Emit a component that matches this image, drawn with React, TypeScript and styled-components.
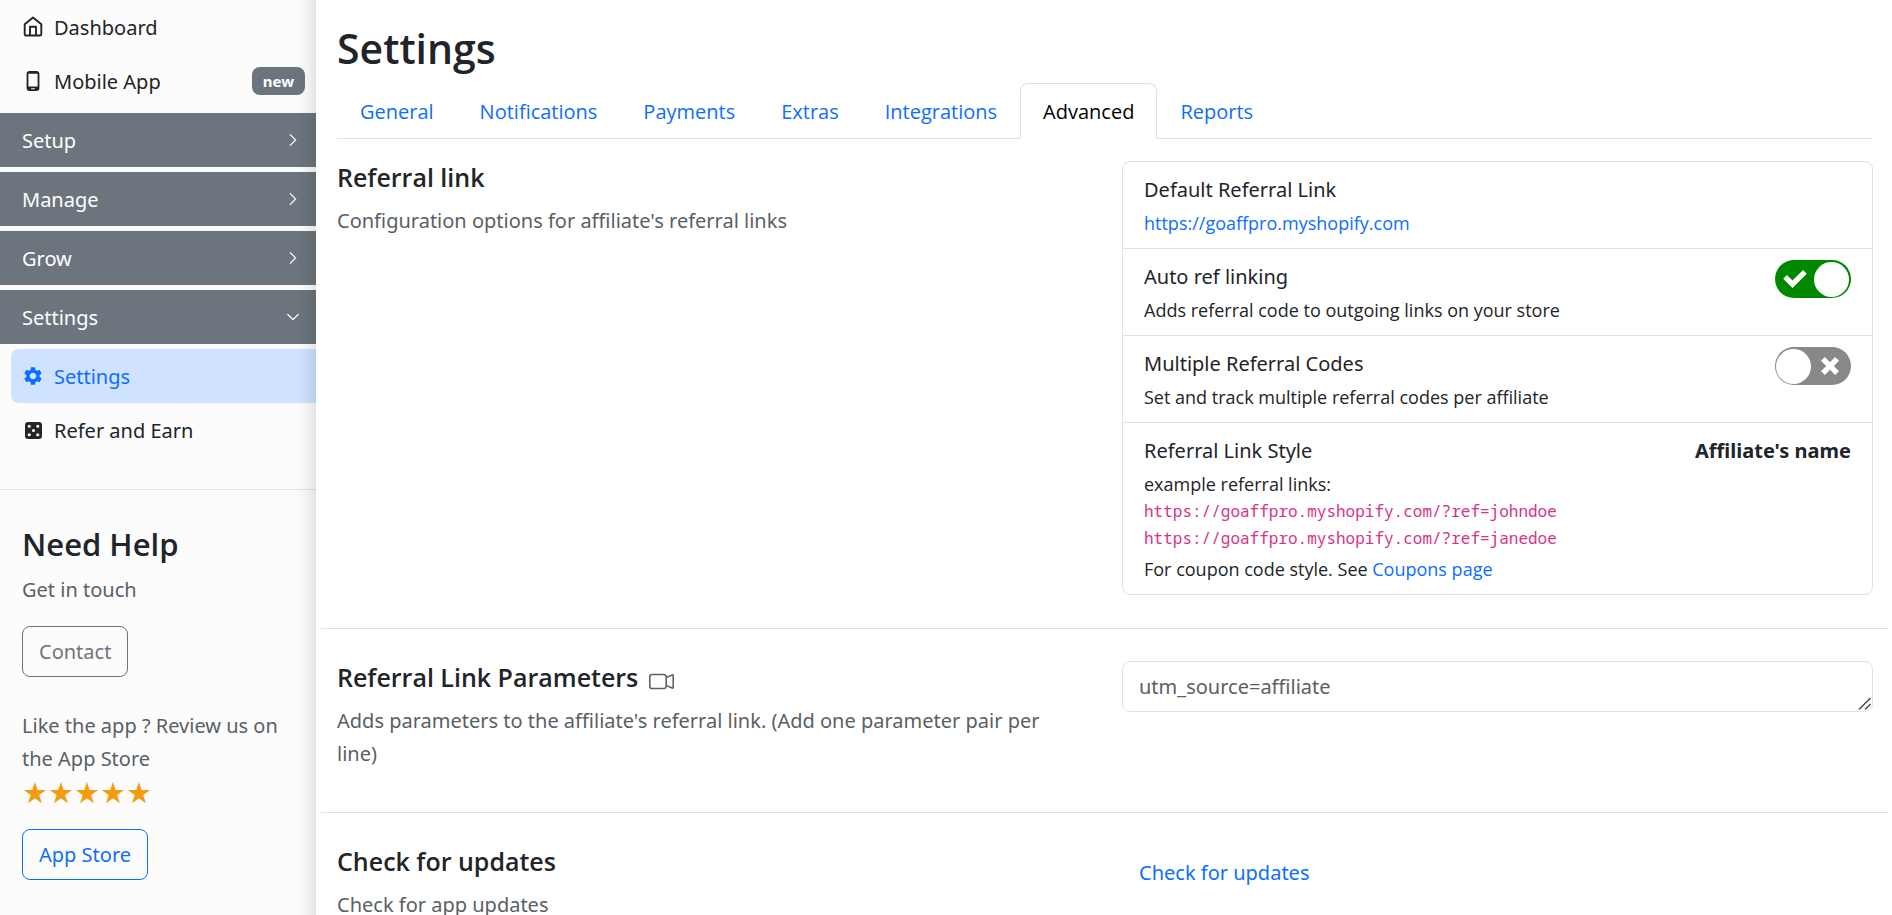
import React, { useState } from "react";
import styled, { createGlobalStyle } from "styled-components";
import { BsCameraVideo, BsChevronDown, BsChevronRight, BsDice5Fill } from "react-icons/bs";
import { MdOutlinePhoneAndroid, MdSettings } from "react-icons/md";

const Global = createGlobalStyle`
  *, *::before, *::after { box-sizing: border-box; }
  body {
    margin: 0;
    background: #fff;
    color: #212529;
    font-family: "Segoe UI", "Noto Sans", sans-serif;
    font-size: 20px;
    line-height: 33px;
  }
  h1, h2, h3, p { margin: 0; }
  h1, h2, h3 { font-family: "Segoe UI", "Open Sans", sans-serif; font-weight: 600; }
  a { color: #0d6efd; text-decoration: none; }
  button, textarea { font: inherit; }
`;

const Layout = styled.div`
  display: flex;
  height: 100vh;
  overflow: hidden;
`;

const Sidebar = styled.aside`
  position: relative;
  flex: 0 0 316px;
  background: #fcfcfc;
  overflow: hidden;

  &::after {
    content: "";
    position: absolute;
    inset: 0;
    box-shadow: inset -22px 0 22px -22px rgba(0, 0, 0, 0.2);
    pointer-events: none;
  }
`;

const NavItem = styled.a<{ $active?: boolean }>`
  display: flex;
  align-items: center;
  gap: 10px;
  height: 54px;
  margin-left: 11px;
  padding: 0 11px;
  border-radius: 8px 0 0 8px;
  color: ${(p) => (p.$active ? "#0d6efd" : "#212529")};
  background: ${(p) => (p.$active ? "#cfe2ff" : "transparent")};
`;

const NavIcon = styled.span`
  display: flex;
  flex: none;
  justify-content: center;
  width: 22px;
`;

const Badge = styled.span`
  margin-left: auto;
  padding: 0 11px;
  border-radius: 8px;
  background: #6c757d;
  color: #fff;
  font-size: 15px;
  font-weight: 700;
  line-height: 28px;
`;

const GroupButton = styled.button`
  display: flex;
  align-items: center;
  justify-content: space-between;
  width: 100%;
  height: 54px;
  margin: 5px 0;
  padding: 0 16px 0 22px;
  border: 0;
  background: #6c757d;
  color: #fff;
  text-align: left;

  svg { stroke: currentColor; stroke-width: 0.6; }
`;

const Help = styled.section`
  margin-top: 32px;
  padding: 33px 22px;
  border-top: 1px solid #dee2e6;
  color: #5a5f64;

  p { margin-bottom: 2px; }
`;

const HelpTitle = styled.h3`
  margin-bottom: 8px;
  color: #212529;
  font-size: 31px;
  line-height: 42px;
`;

const OutlineButton = styled.button<{ $color: string }>`
  display: block;
  height: 51px;
  margin: 20px 0 32px;
  padding: 0 16px;
  border: 1px solid ${(p) => p.$color};
  border-radius: 8px;
  background: transparent;
  color: ${(p) => p.$color};
`;

const Stars = styled.div`
  color: #f39c12;
  font-family: "DejaVu Sans", sans-serif;
  font-size: 29px;
  line-height: 32px;
`;

const Main = styled.main`
  flex: 1;
  min-width: 0;
  margin: 0 3px 0 5px;
`;

const Header = styled.header`
  padding: 22px 16px 0;
`;

const Title = styled.h1`
  margin-bottom: 8px;
  font-size: 41px;
  line-height: 53px;
`;

const Tabs = styled.nav`
  display: flex;
  border-bottom: 1px solid #dee2e6;
  font-family: "Segoe UI", "Open Sans", sans-serif;
`;

const Tab = styled.a<{ $active?: boolean }>`
  height: 56px;
  margin-bottom: -1px;
  padding: 11px 22px;
  border: 1px solid;
  border-color: ${(p) => (p.$active ? "#dee2e6 #dee2e6 #fff" : "transparent")};
  border-radius: 8px 8px 0 0;
  color: ${(p) => (p.$active ? "#000" : "#0d6efd")};
`;

const Section = styled.section`
  display: grid;
  grid-template-columns: 1fr 1fr;
  align-items: start;
  gap: 34px;
  padding: 32px 16px 33px;
  border-bottom: 1px solid #dee2e6;

  &:first-of-type { padding-top: 22px; }
  &:last-of-type { border-bottom: 0; }
`;

const SectionTitle = styled.h2`
  display: flex;
  align-items: center;
  gap: 11px;
  margin-bottom: 10px;
  font-size: 25px;
  line-height: 33px;

  svg { margin-top: 8px; color: #5a5f64; }
`;

const Muted = styled.p`
  margin-bottom: 9px;
  padding-right: 22px;
  color: #5a5f64;
`;

const Card = styled.div`
  border: 1px solid #dee2e6;
  border-radius: 8px;
`;

const Row = styled.div`
  display: flex;
  justify-content: space-between;
  align-items: flex-start;
  padding: 11px 21px;

  & + & { border-top: 1px solid #dee2e6; }
`;

const RowText = styled.p`
  padding-top: 4px;
  font-family: "Segoe UI", "Open Sans", sans-serif;
  font-size: 18px;
  line-height: 27px;
`;

const Code = styled.code`
  display: block;
  color: #d63384;
  font-family: "Noto Sans Mono", "Liberation Mono", monospace;
  font-size: 16px;
  line-height: 27px;
`;

const SwitchTrack = styled.label<{ $on: boolean }>`
  position: relative;
  display: flex;
  flex-direction: ${(p) => (p.$on ? "row" : "row-reverse")};
  align-items: center;
  justify-content: space-between;
  width: 76px;
  height: 38px;
  padding: ${(p) => (p.$on ? "0 2px 0 8px" : "0 12px 0 1px")};
  border-radius: 19px;
  background: ${(p) => (p.$on ? "#008800" : "#888888")};
  cursor: pointer;
`;

const SwitchInput = styled.input`
  position: absolute;
  inset: 0;
  width: 100%;
  height: 100%;
  margin: 0;
  opacity: 0;
`;

const Knob = styled.span`
  width: 35px;
  height: 35px;
  border-radius: 50%;
  background: #fff;
`;

const ParamsField = styled.div`
  position: relative;
`;

const Params = styled.textarea`
  display: block;
  width: 100%;
  height: 51px;
  padding: 8px 16px;
  border: 1px solid #dee2e6;
  border-radius: 8px;
  background: #fff;
  color: #5a5f64;
  overflow: hidden;
  resize: vertical;

  &::-webkit-resizer { background: transparent; }
`;

const ResizeGrip = styled.svg`
  position: absolute;
  right: 1px;
  bottom: 1px;
  pointer-events: none;
`;

const LinkButton = styled.button`
  justify-self: start;
  height: 54px;
  padding: 0 17px;
  border: 0;
  background: none;
  color: #0d6efd;
`;

function HomeIcon() {
  return (
    <svg width="22" height="22" viewBox="0 0 22 22" fill="none" stroke="currentColor" strokeWidth="1.9" strokeLinejoin="round" aria-hidden="true">
      <path d="M2.7 8.2 L11 1.4 L19.3 8.2 V18.2 Q19.3 19.5 18 19.5 H4 Q2.7 19.5 2.7 18.2 Z" />
      <path d="M8 19.5 V10.8 H14 V19.5" />
    </svg>
  );
}

function Switch({ label, initial }: { label: string; initial: boolean }) {
  const [on, setOn] = useState(initial);
  return (
    <SwitchTrack $on={on}>
      <SwitchInput type="checkbox" aria-label={label} checked={on} onChange={() => setOn(!on)} />
      {on ? (
        <svg width="24" height="18" viewBox="0 0 13.37 10.21" fill="#fff" aria-hidden="true">
          <path d="M11.264 0L5.26 6.004 2.103 2.847 0 4.95l5.26 5.26 8.108-8.107L11.264 0" />
        </svg>
      ) : (
        <svg width="18" height="18" viewBox="0 0 9.9 9.9" fill="#fff" aria-hidden="true">
          <path d="M9.9 2.12L7.78 0 4.95 2.828 2.12 0 0 2.12l2.83 2.83L0 7.776 2.123 9.9 4.95 7.07 7.78 9.9 9.9 7.776 7.072 4.95 9.9 2.12" />
        </svg>
      )}
      <Knob />
    </SwitchTrack>
  );
}

const tabs = ["General", "Notifications", "Payments", "Extras", "Integrations", "Advanced", "Reports"];

export default function App() {
  return (
    <>
      <Global />
      <Layout>
        <Sidebar>
          <NavItem href="#dashboard"><NavIcon><HomeIcon /></NavIcon>Dashboard</NavItem>
          <NavItem href="#mobile">
            <NavIcon><MdOutlinePhoneAndroid size={22} /></NavIcon>Mobile App<Badge>new</Badge>
          </NavItem>
          {["Setup", "Manage", "Grow"].map((name) => (
            <GroupButton key={name} type="button">{name}<BsChevronRight size={14} /></GroupButton>
          ))}
          <GroupButton type="button">Settings<BsChevronDown size={14} /></GroupButton>
          <NavItem href="#settings" $active><NavIcon><MdSettings size={22} /></NavIcon>Settings</NavItem>
          <NavItem href="#refer"><NavIcon><BsDice5Fill size={17} /></NavIcon>Refer and Earn</NavItem>
          <Help>
            <HelpTitle>Need Help</HelpTitle>
            <p>Get in touch</p>
            <OutlineButton type="button" $color="#6c757d">Contact</OutlineButton>
            <p>Like the app ? Review us on the App Store</p>
            <Stars role="img" aria-label="5 stars">★★★★★</Stars>
            <OutlineButton type="button" $color="#0d6efd">App Store</OutlineButton>
          </Help>
        </Sidebar>
        <Main>
          <Header>
            <Title>Settings</Title>
            <Tabs>
              {tabs.map((name) => (
                <Tab key={name} href={`#${name.toLowerCase()}`} $active={name === "Advanced"}>{name}</Tab>
              ))}
            </Tabs>
          </Header>
          <Section>
            <div>
              <SectionTitle>Referral link</SectionTitle>
              <Muted>Configuration options for affiliate's referral links</Muted>
            </div>
            <Card>
              <Row>
                <div>
                  <p>Default Referral Link</p>
                  <RowText><a href="#store">https://goaffpro.myshopify.com</a></RowText>
                </div>
              </Row>
              <Row>
                <div>
                  <p>Auto ref linking</p>
                  <RowText>Adds referral code to outgoing links on your store</RowText>
                </div>
                <Switch label="Auto ref linking" initial={true} />
              </Row>
              <Row>
                <div>
                  <p>Multiple Referral Codes</p>
                  <RowText>Set and track multiple referral codes per affiliate</RowText>
                </div>
                <Switch label="Multiple Referral Codes" initial={false} />
              </Row>
              <Row>
                <div>
                  <p>Referral Link Style</p>
                  <RowText>example referral links:</RowText>
                  <Code>https://goaffpro.myshopify.com/?ref=johndoe</Code>
                  <Code>https://goaffpro.myshopify.com/?ref=janedoe</Code>
                  <RowText>For coupon code style. See <a href="#coupons">Coupons page</a></RowText>
                </div>
                <strong>Affiliate's name</strong>
              </Row>
            </Card>
          </Section>
          <Section>
            <div>
              <SectionTitle>Referral Link Parameters<BsCameraVideo size={25} /></SectionTitle>
              <Muted>Adds parameters to the affiliate's referral link. (Add one parameter pair per line)</Muted>
            </div>
            <ParamsField>
              <Params aria-label="Referral Link Parameters" rows={1} defaultValue="utm_source=affiliate" />
              <ResizeGrip width="14" height="14" viewBox="0 0 14 14" stroke="#444" strokeWidth="1.4" aria-hidden="true">
                <path d="M1 12.5 L12.5 1 M7 12.5 L12.5 7" />
              </ResizeGrip>
            </ParamsField>
          </Section>
          <Section>
            <div>
              <SectionTitle>Check for updates</SectionTitle>
              <Muted>Check for app updates</Muted>
            </div>
            <LinkButton type="button">Check for updates</LinkButton>
          </Section>
        </Main>
      </Layout>
    </>
  );
}
